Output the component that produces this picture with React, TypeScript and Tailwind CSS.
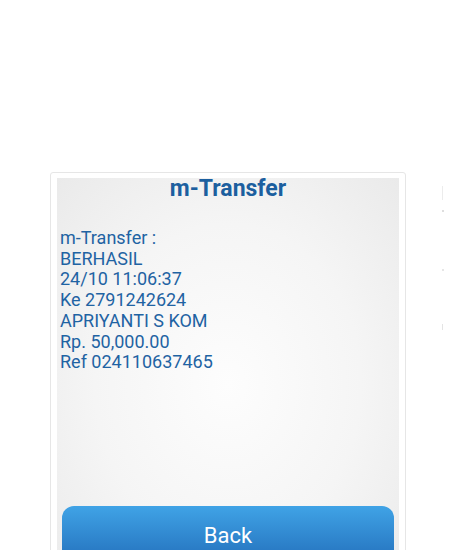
import React from "react";

export default function App() {
  const lines = [
    "m-Transfer :",
    "BERHASIL",
    "24/10 11:06:37",
    "Ke 2791242624",
    "APRIYANTI S KOM",
    "Rp. 50,000.00",
    "Ref 024110637465",
  ];
  return (
    <div
      className="w-[454px] h-[550px] overflow-hidden bg-white"
      style={{ fontFamily: "Roboto, 'Noto Sans', sans-serif" }}
    >
      <div className="flex pt-[172px] pl-[50px] gap-[35px]">
        <div className="w-[356px] h-[420px] border border-[#e6e6e6] rounded-[3px] bg-white pt-[5px] px-[6px]">
          <div className="flex flex-col h-full bg-[radial-gradient(ellipse_at_center,#fdfdfd_0%,#f5f5f5_55%,#eaeaea_100%)]">
            <div className="h-[23px] leading-[23px] mt-[-1px] text-center text-[23px] font-bold text-[#1c5f9f]">
              m-Transfer
            </div>
            <div className="mt-[28px] pl-[3px] text-[18px] leading-[20.7px] text-[#1f63a3]">
              {lines.map((l) => (
                <div key={l}>{l}</div>
              ))}
            </div>
            <div className="mt-[133px] mx-[5px] h-[80px] rounded-t-[12px] bg-gradient-to-b from-[#40a3e6] to-[#1a5cab] flex justify-center pt-[17px]">
              <span className="text-[22px] leading-[26px] text-white">Back</span>
            </div>
          </div>
        </div>
        <div className="flex flex-col items-center w-[3px] pt-[14px]">
          <div className="w-[1px] h-[14px] bg-[#ececec]" />
          <div className="mt-[10px] w-[2px] h-[2px] bg-[#dedede]" />
          <div className="mt-[57px] w-[2px] h-[2px] bg-[#e6e6e6]" />
          <div className="mt-[53px] w-[1px] h-[6px] bg-[#e4e4e4]" />
        </div>
      </div>
    </div>
  );
}
